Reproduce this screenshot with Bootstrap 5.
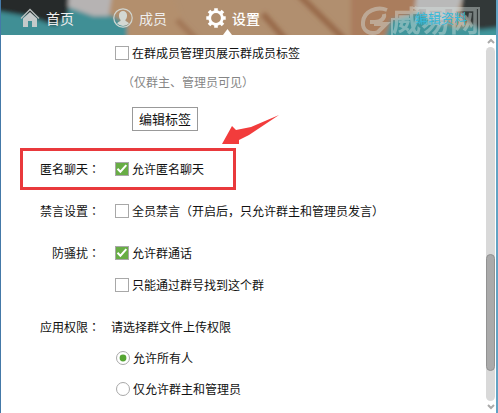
<!DOCTYPE html>
<html lang="zh-CN">
<head>
<meta charset="utf-8">
<meta name="viewport" content="width=device-width, initial-scale=1">
<title>群设置</title>
<link href="https://cdn.jsdelivr.net/npm/bootstrap@5.3.0/dist/css/bootstrap.min.css" rel="stylesheet">
<style>
body { font-family: "Noto Sans CJK SC", sans-serif; font-size: 12px; line-height: 20px; color: #111; background: #fff; }
.shell { min-height: 100vh; border-left: 1px solid #4479a8; border-right: 2px solid #62a3c4; }
.top-bar { height: 35px; background: #b18f6f; }
.backdrop { inset: 0; }
.tab-item { font-size: 14px; color: #eee; gap: 6px; }
.tab-item.current { color: #fff; font-weight: 500; }
.tab-list { padding-left: 19px; gap: 39px; }
.tab-arrow { left: 222px; }
.tab-item svg { width: 20px; height: 20px; }
.brand-mark { right: 14px; top: 5px; color: #d9e4e2; opacity: .42; overflow: visible; }
.edit-link { font-size: 13px; color: #35b9da; right: 29px; top: 8px; }
.settings { padding: 8px 0 14px; }
.field-row { display: grid; grid-template-columns: 99px 1fr; column-gap: 11px; }
.field-name { text-align: right; }
.mid { font-family: "Noto Sans CJK TC", sans-serif; }
.indent { padding-left: 4px; }
.option { display: flex; align-items: center; gap: 3px; }
.option .form-check-input { width: 14px; height: 14px; margin: 0; border: 1px solid #a8a8a8; background-color: #fff; box-shadow: none; flex: none; }
.option .form-check-input[type=checkbox] { border-radius: 0; }
.option .form-check-input[type=checkbox]:checked { background-color: #68ad45; background-size: 14px 14px; background-image: url("data:image/svg+xml,%3Csvg xmlns='http://www.w3.org/2000/svg' viewBox='0 0 14 14'%3E%3Cpath d='M2.5 6.8L5.4 9.7L11.3 3.2' fill='none' stroke='white' stroke-width='2'/%3E%3C/svg%3E"); }
.option .form-check-input[type=radio]:checked { background-size: 14px 14px; background-image: url("data:image/svg+xml,%3Csvg xmlns='http://www.w3.org/2000/svg' viewBox='0 0 14 14'%3E%3Ccircle cx='7' cy='7' r='3.4' fill='%2355a532'/%3E%3C/svg%3E"); }
.radio-set { padding-left: 5px; }
.hint { color: #858585; margin: 9px 0 15px; padding-left: 7px; }
.tag-btn { font-size: 13px; line-height: 22px; padding: 0 6px; margin-left: 17px; border: 1px solid #999; border-radius: 0; color: #111; }
.marked { border: 3px solid #e9393c; margin: 17px 250px 0 19px; padding: 8px 0; grid-template-columns: 77px 1fr; }
.pointer { left: 221px; top: 114px; }
.gap-lg { margin-top: 22px; }
.gap-first { margin-top: 11px; }
.gap-md { margin-top: 12px; }
.gap-sm { margin-top: 11px; }
.scroll-rail { width: 9px; margin-right: 1px; padding: 3px 0; }
.rail-track { background: #d9d9d9; border-radius: 5px; margin: 3px 0; }
.rail-above { flex: 209; }
.rail-thumb { flex: 117; background: #aaa; border: 1px solid #929292; border-radius: 5px; }
.rail-below { flex: 30; }
</style>
<script src="https://cdn.jsdelivr.net/npm/bootstrap@5.3.0/dist/js/bootstrap.bundle.min.js"></script>
</head>
<body>
<div class="shell d-flex flex-column position-relative">
  <header class="top-bar position-relative">
    <svg class="backdrop position-absolute w-100 h-100" viewBox="0 0 495 35" preserveAspectRatio="none" aria-hidden="true">
      <defs><filter id="soft" x="-10%" y="-30%" width="120%" height="160%"><feGaussianBlur stdDeviation="2"/></filter></defs>
      <g filter="url(#soft)">
        <path d="M-10-10H80L128 22L127 45H-10Z" fill="#3f8f95"/>
        <path d="M-10-10H72L66 16L54 26L30 17L-10 10Z" fill="#252a2b"/>
        <path d="M68-10H118L108 16L92 16L67 7Z" fill="#b6b3b3"/>
        <path d="M112-10L108 14L126 24V45H190L170-10Z" fill="#b38f6d"/>
        <path d="M262 14L285 40M297-6L344 40" stroke="#98694a" stroke-width="6" fill="none"/>
        <path d="M176 20L196 40" stroke="#a27756" stroke-width="6"/>
        <path d="M350-10H418L410 16L370 45H350Z" fill="#aa7d5d"/>
        <path d="M382 45L390 20L420 12L455 28L510 20V45Z" fill="#40959b"/>
        <path d="M416-10H464L456 14L440 25L414 10Z" fill="#b9b9b9"/>
        <path d="M462-10H510V26L478 30L460 16Z" fill="#303738"/>
      </g>
    </svg>
    <svg class="brand-mark position-absolute" width="122" height="30" viewBox="0 0 122 30" role="img" aria-label="e威易网">
      <path d="M27 5C17 1 4 6 3 17C2 26 10 30 18 27L26 19H14M10 17H15C21 17 25 13 24 9" fill="none" stroke="currentColor" stroke-width="4"/>
      <path d="M32 30V14H51V3H119V30" fill="none" stroke="currentColor" stroke-width="2"/>
      <text x="32" y="27" font-size="29" font-weight="700" fill="currentColor">威易网</text>
    </svg>
    <nav class="tab-list d-flex align-items-center h-100 position-relative">
      <a class="tab-item d-flex align-items-center text-decoration-none" href="#">
        <svg viewBox="0 0 20 20" fill="none" aria-hidden="true"><path d="M1 10.5L10 1.500L19 10.5" stroke="#b9bebd" stroke-width="1.3"/><path d="M3 10.5L10 4L17 10.5V19H12V13H8V19H3Z" fill="#c5caca"/></svg>首页</a>
      <a class="tab-item d-flex align-items-center text-decoration-none" href="#">
        <svg viewBox="0 0 20 20" aria-hidden="true"><circle cx="10" cy="10" r="9.2" fill="none" stroke="#d0d5d0" stroke-width="1.2"/><path d="M10 3C7.5 3 5.800 4.800 6 7.700C6 9.500 6.700 11 7.700 12C7.700 13.6 5.500 13.6 4 15.2A8 8 0 0 0 16 15.2C14.5 13.6 12.3 13.6 12.3 12C13.3 11 14 9.500 14 7.700C14.2 4.800 12.5 3 10 3Z" fill="#d3d8d3"/></svg>成员</a>
      <a class="tab-item current d-flex align-items-center text-decoration-none" href="#" aria-current="page">
        <svg viewBox="0 0 20 20" fill="none" stroke="#fff" aria-hidden="true"><circle cx="10" cy="10" r="6.300" stroke-width="2.8"/><path d="M10 .3V4M10 16V19.7M.3 10H4M16 10H19.7M3 3L5.500 5.500M14.5 14.5L17 17M3 17L5.500 14.5M14.5 5.500L17 3" stroke-width="3.6"/></svg>设置</a>
    </nav>
    <svg class="tab-arrow position-absolute bottom-0" width="9" height="6" aria-hidden="true"><path d="M0 6L4.500 0L9 6Z" fill="#fff"/></svg>
    <a class="edit-link position-absolute text-decoration-none" href="#">编辑资料</a>
  </header>

  <div class="d-flex flex-grow-1">
    <main class="settings flex-grow-1">
      <div class="field-row">
        <span></span>
        <div class="indent">
          <label class="option"><input class="form-check-input" type="checkbox">在群成员管理页展示群成员标签</label>
          <p class="hint">（仅群主、管理员可见）</p>
          <button type="button" class="tag-btn btn d-block">编辑标签</button>
        </div>
      </div>

      <div class="field-row marked">
        <span class="field-name">匿名聊天<span class="mid" lang="zh-TW">：</span></span>
        <div class="indent"><label class="option"><input class="form-check-input" type="checkbox" checked>允许匿名聊天</label></div>
      </div>

      <div class="field-row gap-first">
        <span class="field-name">禁言设置<span class="mid" lang="zh-TW">：</span></span>
        <div class="indent"><label class="option"><input class="form-check-input" type="checkbox">全员禁言（开启后，只允许群主和管理员发言）</label></div>
      </div>

      <div class="field-row gap-lg">
        <span class="field-name">防骚扰<span class="mid" lang="zh-TW">：</span></span>
        <div class="indent">
          <label class="option"><input class="form-check-input" type="checkbox" checked>允许群通话</label>
          <label class="option gap-md"><input class="form-check-input" type="checkbox">只能通过群号找到这个群</label>
        </div>
      </div>

      <div class="field-row gap-lg" role="radiogroup" aria-labelledby="upload-title">
        <span class="field-name">应用权限<span class="mid" lang="zh-TW">：</span></span>
        <div>
          <span id="upload-title">请选择群文件上传权限</span>
          <div class="radio-set">
            <label class="option gap-sm"><input class="form-check-input" type="radio" name="upload" checked>允许所有人</label>
            <label class="option gap-sm"><input class="form-check-input" type="radio" name="upload">仅允许群主和管理员</label>
          </div>
        </div>
      </div>
    </main>

    <div class="scroll-rail d-flex flex-column align-items-center" aria-hidden="true">
      <svg width="8" height="6" viewBox="0 0 8 6"><path d="M1 5L4 2L7 5" fill="none" stroke="#aaa" stroke-width="2"/></svg>
      <div class="rail-track d-flex flex-column flex-grow-1 w-100">
        <div class="rail-above"></div><div class="rail-thumb"></div><div class="rail-below"></div>
      </div>
      <svg width="8" height="6" viewBox="0 0 8 6"><path d="M1 1L4 4L7 1" fill="none" stroke="#aaa" stroke-width="2"/></svg>
    </div>
  </div>

  <svg class="pointer position-absolute" width="58" height="31" viewBox="0 0 58 31" aria-hidden="true"><path d="M57 1L29 13L14 16L10 12L0 30L17 30L17 26L27 21Z" fill="#f23c3c"/></svg>
</div>
</body>
</html>
